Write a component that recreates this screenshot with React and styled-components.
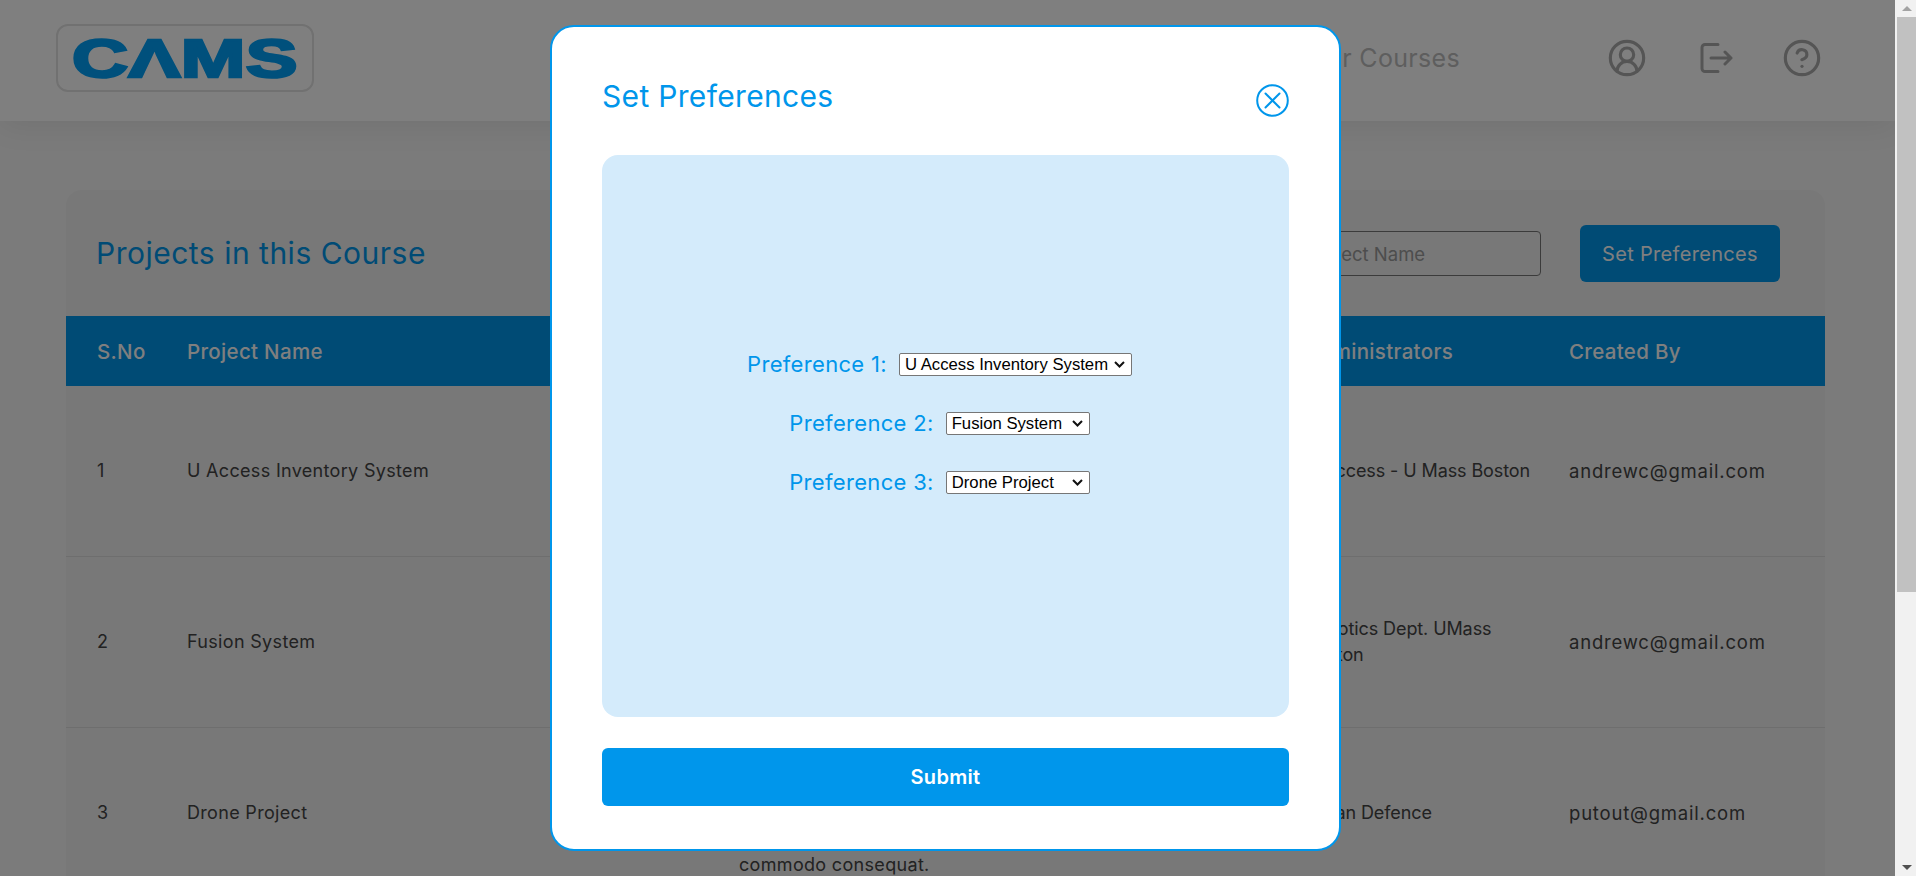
import styled, { createGlobalStyle } from "styled-components";
import { CircleUserRound, CircleHelp } from "lucide-react";

const LOREM =
  "Lorem ipsum dolor sit amet, consectetur adipiscing elit, sed do eiusmod tempor incididunt ut labore et dolore magna aliqua. Ut enim ad minim veniam, quis nostrud exercitation ullamco laboris nisi ut aliquip ex ea commodo consequat.";

const CHEVRON =
  "data:image/svg+xml,%3Csvg xmlns='http://www.w3.org/2000/svg' width='11' height='7' viewBox='0 0 11 7'%3E%3Cpath d='M1 1l4.5 4.5L10 1' fill='none' stroke='%23111' stroke-width='2'/%3E%3C/svg%3E";

const projects = [
  { id: 1, name: "U Access Inventory System", admin: "U Access - U Mass Boston", by: "andrewc@gmail.com" },
  { id: 2, name: "Fusion System", admin: "Robotics Dept. UMass Boston", by: "andrewc@gmail.com" },
  { id: 3, name: "Drone Project", admin: "Indian Defence", by: "putout@gmail.com" },
];

const preferences = [
  { label: "Preference 1:", value: "U Access Inventory System", width: 233 },
  { label: "Preference 2:", value: "Fusion System", width: 144 },
  { label: "Preference 3:", value: "Drone Project", width: 144 },
];

const App = () => {
  return (
    <>
      <GlobalStyle />
      <Screen>
        <Page>
          <Header>
            <LogoBox>
              <LogoSvg width="222" height="64" viewBox="0 0 222 64">
                <LogoText x="-2" y="51" textLength="226" lengthAdjust="spacingAndGlyphs">
                  CΛMS
                </LogoText>
              </LogoSvg>
            </LogoBox>
            <Nav>
              <NavLink>Your Courses</NavLink>
              <NavIcons>
                <CircleUserRound size={40} strokeWidth={1.9} />
                <LogoutIcon width="33" height="30" viewBox="0 0 33 30" fill="none" stroke="currentColor" strokeWidth="3" strokeLinecap="round" strokeLinejoin="round">
                  <path d="M18 1.5H5a3 3 0 0 0-3 3v21a3 3 0 0 0 3 3h13" />
                  <path d="M11 15h20M25 9l6 6-6 6" />
                </LogoutIcon>
                <CircleHelp size={40} strokeWidth={1.9} />
              </NavIcons>
            </Nav>
          </Header>

          <Card>
            <CardTop>
              <CardTitle>Projects in this Course</CardTitle>
              <CardActions>
                <SearchInput placeholder="Search by Project Name" />
                <SetButton>Set Preferences</SetButton>
              </CardActions>
            </CardTop>
            <Table>
              <colgroup>
                <col width="90" />
                <col width="552" />
                <col width="566" />
                <col width="264" />
                <col width="287" />
              </colgroup>
              <thead>
                <tr>
                  <Th>S.No</Th>
                  <Th>Project Name</Th>
                  <Th>Description</Th>
                  <Th>Administrators</Th>
                  <Th>Created By</Th>
                </tr>
              </thead>
              <tbody>
                {projects.map((p) => (
                  <Row key={p.id}>
                    <Td>{p.id}</Td>
                    <Td>{p.name}</Td>
                    <Td $right={36}>{LOREM}</Td>
                    <AdminCell>{p.admin}</AdminCell>
                    <EmailCell>{p.by}</EmailCell>
                  </Row>
                ))}
              </tbody>
            </Table>
          </Card>

          <Backdrop>
            <Modal>
              <ModalTop>
                <ModalTitle>Set Preferences</ModalTitle>
                <CloseButton aria-label="Close">
                  <svg width="33" height="33" viewBox="0 0 33 33" fill="none" stroke="currentColor" strokeWidth="2" strokeLinecap="round">
                    <circle cx="16.5" cy="16.5" r="15.3" />
                    <path d="M9.5 9.5l14 14M23.5 9.5l-14 14" />
                  </svg>
                </CloseButton>
              </ModalTop>
              <Panel>
                {preferences.map((pref) => (
                  <PrefRow key={pref.label}>
                    <PrefLabel>{pref.label}</PrefLabel>
                    <PrefSelect $width={pref.width} defaultValue={pref.value}>
                      {projects.map((p) => (
                        <option key={p.id}>{p.name}</option>
                      ))}
                    </PrefSelect>
                  </PrefRow>
                ))}
              </Panel>
              <SubmitButton>Submit</SubmitButton>
            </Modal>
          </Backdrop>
        </Page>

        <ScrollBar>
          <ScrollArrow $up />
          <ScrollThumb />
          <ScrollArrow />
        </ScrollBar>
      </Screen>
    </>
  );
};

const GlobalStyle = createGlobalStyle`
  html, body {
    margin: 0;
    height: 100%;
    overflow: hidden;
  }
  body {
    font-family: Inter, "Noto Sans", sans-serif;
    letter-spacing: 0.32px;
  }
`;

const Screen = styled.div`
  display: flex;
  height: 100vh;
`;

const Page = styled.div`
  position: relative;
  flex: 1;
  min-width: 0;
  overflow: hidden;
  background: #f6f6f6;
`;

const Header = styled.header`
  height: 121px;
  box-sizing: border-box;
  padding: 24px 73px 0 56px;
  display: flex;
  justify-content: space-between;
  align-items: flex-start;
  background: #ffffff;
  box-shadow: 0 4px 30px rgba(0, 0, 0, 0.08);
`;

const LogoBox = styled.div`
  width: 258px;
  height: 68px;
  box-sizing: border-box;
  border: 2px solid #e2e2e2;
  border-radius: 12px;
  display: flex;
  align-items: center;
  justify-content: center;
`;

const LogoSvg = styled.svg`
  overflow: visible;
`;

const LogoText = styled.text`
  font-family: "Liberation Sans", sans-serif;
  font-weight: 700;
  font-size: 53px;
  fill: #00a0f8;
  stroke: #00a0f8;
  stroke-width: 2.5px;
`;

const Nav = styled.nav`
  display: flex;
  align-items: center;
  height: 68px;
`;

const NavLink = styled.span`
  font-size: 25px;
  color: #bdbdbd;
`;

const NavIcons = styled.div`
  display: flex;
  align-items: center;
  gap: 49px;
  margin-left: 147px;
  color: #ababab;
`;

const LogoutIcon = styled.svg`
  margin-left: 4px;
`;

const Card = styled.section`
  margin: 69px 70px 0 66px;
  background: #f0f0f0;
  border-radius: 16px;
  overflow: hidden;
`;

const CardTop = styled.div`
  height: 126px;
  box-sizing: border-box;
  padding: 35px 45px 0 30px;
  display: flex;
  justify-content: space-between;
`;

const CardTitle = styled.h2`
  margin: 0;
  height: 57px;
  line-height: 57px;
  font-size: 30px;
  font-weight: 400;
  letter-spacing: 0.5px;
  color: #0096eb;
`;

const CardActions = styled.div`
  display: flex;
  align-items: center;
  gap: 39px;
  height: 57px;
`;

const SearchInput = styled.input`
  width: 342px;
  height: 45px;
  box-sizing: border-box;
  padding: 0 14px;
  background: transparent;
  border: 1px solid #777;
  border-radius: 4px;
  font-family: inherit;
  font-size: 18.5px;
  &::placeholder {
    color: #9a9a9a;
  }
`;

const SetButton = styled.button`
  width: 200px;
  height: 57px;
  border: 0;
  border-radius: 6px;
  background: #0096eb;
  color: #ffffff;
  font-family: inherit;
  font-size: 20px;
  letter-spacing: inherit;
`;

const Table = styled.table`
  width: 100%;
  table-layout: fixed;
  border-collapse: collapse;
`;

const Th = styled.th`
  height: 70px;
  padding: 0 8px 0 31px;
  background: #0096eb;
  color: #ffffff;
  font-size: 20.5px;
  font-weight: 500;
  text-align: left;
`;

const Row = styled.tr`
  border-bottom: 1px solid #dcdcdc;
`;

const Td = styled.td`
  padding: 20px ${(p) => p.$right ?? 8}px 20px 31px;
  font-size: 18px;
  line-height: 26px;
  color: #444444;
`;

const AdminCell = styled(Td)`
  padding-right: 0;
  letter-spacing: -0.1px;
`;

const EmailCell = styled(Td)`
  font-size: 18.5px;
  letter-spacing: 0.8px;
`;

const Backdrop = styled.div`
  position: absolute;
  inset: 0;
  padding-right: 4px;
  display: flex;
  align-items: center;
  justify-content: center;
  background: rgba(0, 0, 0, 0.5);
`;

const Modal = styled.div`
  width: 791px;
  height: 826px;
  box-sizing: border-box;
  padding: 0 50px;
  display: flex;
  flex-direction: column;
  background: #ffffff;
  border: 2px solid #0096eb;
  border-radius: 24px;
`;

const ModalTop = styled.div`
  height: 128px;
  flex-shrink: 0;
  display: flex;
  justify-content: space-between;
  align-items: flex-start;
`;

const ModalTitle = styled.h2`
  margin: 46px 0 0;
  height: 46px;
  line-height: 46px;
  font-size: 30px;
  font-weight: 400;
  color: #0096eb;
`;

const CloseButton = styled.button`
  margin-top: 57px;
  padding: 0;
  border: 0;
  background: none;
  color: #0096eb;
  display: flex;
`;

const Panel = styled.div`
  height: 562px;
  flex-shrink: 0;
  padding: 0 12px 26px 0;
  box-sizing: border-box;
  display: flex;
  flex-direction: column;
  align-items: center;
  justify-content: center;
  gap: 29px;
  background: #d4ebfb;
  border-radius: 16px;
`;

const PrefRow = styled.div`
  height: 30px;
  display: flex;
  align-items: center;
  gap: 12px;
`;

const PrefLabel = styled.label`
  font-size: 22px;
  color: #0096eb;
`;

const PrefSelect = styled.select`
  appearance: none;
  width: ${(p) => p.$width}px;
  height: 23px;
  box-sizing: border-box;
  padding: 0 20px 0 5px;
  background: #ffffff url("${CHEVRON}") no-repeat right 6px center;
  border: 1px solid #767676;
  border-radius: 2px;
  color: #000000;
  font-family: "Liberation Sans", Arial, sans-serif;
  font-size: 16.7px;
  letter-spacing: normal;
`;

const SubmitButton = styled.button`
  height: 58px;
  margin-top: 31px;
  flex-shrink: 0;
  border: 0;
  border-radius: 6px;
  background: #0096eb;
  color: #ffffff;
  font-family: inherit;
  font-size: 20px;
  font-weight: 600;
  letter-spacing: inherit;
`;

const ScrollBar = styled.div`
  width: 21px;
  flex-shrink: 0;
  padding-left: 2px;
  box-sizing: border-box;
  display: flex;
  flex-direction: column;
  justify-content: space-between;
  background: #f1f1f1;
`;

const ScrollArrow = styled.div`
  height: 17px;
  display: flex;
  align-items: center;
  justify-content: center;
  &::before {
    content: "";
    border-left: 5px solid transparent;
    border-right: 5px solid transparent;
    ${(p) => (p.$up ? "border-bottom: 5px solid #a3a3a3;" : "border-top: 5px solid #505050;")}
  }
`;

const ScrollThumb = styled.div`
  height: 575px;
  margin-bottom: auto;
  background: #c1c1c1;
`;

export default App;
